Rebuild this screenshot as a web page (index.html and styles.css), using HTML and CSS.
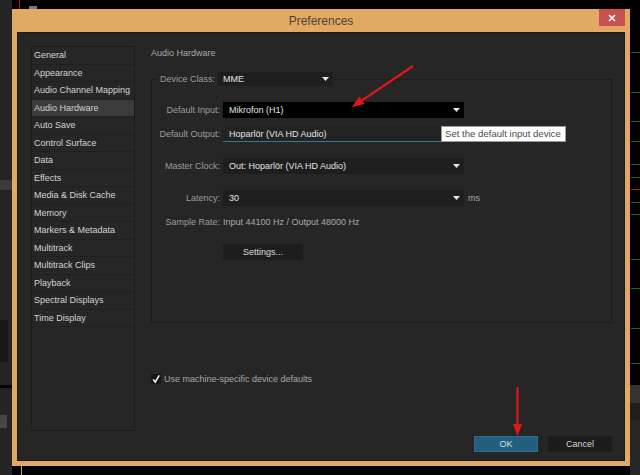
FILE: index.html
```html
<!DOCTYPE html>
<html>
<head>
<meta charset="utf-8">
<link rel="stylesheet" href="styles.css">
</head>
<body>
<div class="desktop">
  <div class="dialog">
    <div class="titlebar">
      <span class="title">Preferences</span>
      <div class="close"><svg width="8" height="8" viewBox="0 0 8 8"><path d="M1 1 L7 7 M7 1 L1 7" stroke="#fff" stroke-width="1.6"/></svg></div>
    </div>
    <div class="content">
      <ul class="nav">
        <li>General</li>
        <li>Appearance</li>
        <li>Audio Channel Mapping</li>
        <li class="active">Audio Hardware</li>
        <li>Auto Save</li>
        <li>Control Surface</li>
        <li>Data</li>
        <li>Effects</li>
        <li>Media &amp; Disk Cache</li>
        <li>Memory</li>
        <li>Markers &amp; Metadata</li>
        <li>Multitrack</li>
        <li>Multitrack Clips</li>
        <li>Playback</li>
        <li>Spectral Displays</li>
        <li>Time Display</li>
      </ul>
      <div class="main">
        <div class="heading">Audio Hardware</div>
        <div class="group">
          <div class="legend">
            <span class="legend-label">Device Class:</span>
            <div class="select class-select"><span>MME</span><svg class="caret" width="7" height="4" viewBox="0 0 7 4"><polygon points="0,0 7,0 3.5,4" fill="#e6e6e6"/></svg></div>
          </div>
          <div class="row row-input">
            <span class="label">Default Input:</span>
            <div class="select black"><span>Mikrofon (H1)</span><svg class="caret" width="7" height="4" viewBox="0 0 7 4"><polygon points="0,0 7,0 3.5,4" fill="#e6e6e6"/></svg></div>
          </div>
          <div class="row row-output">
            <span class="label">Default Output:</span>
            <div class="select focused"><span>Hoparlör (VIA HD Audio)</span></div>
            <div class="tooltip">Set the default input device</div>
          </div>
          <div class="row row-gap">
            <span class="label">Master Clock:</span>
            <div class="select"><span>Out: Hoparlör (VIA HD Audio)</span><svg class="caret" width="7" height="4" viewBox="0 0 7 4"><polygon points="0,0 7,0 3.5,4" fill="#e6e6e6"/></svg></div>
          </div>
          <div class="row row-gap">
            <span class="label">Latency:</span>
            <div class="select"><span>30</span><svg class="caret" width="7" height="4" viewBox="0 0 7 4"><polygon points="0,0 7,0 3.5,4" fill="#e6e6e6"/></svg></div>
            <span class="unit">ms</span>
          </div>
          <div class="row row-rate">
            <span class="label">Sample Rate:</span>
            <span class="value">Input 44100 Hz / Output 48000 Hz</span>
          </div>
          <div class="row row-settings">
            <div class="btn settings">Settings...</div>
          </div>
        </div>
        <div class="check">
          <span class="box"><svg width="10" height="10" viewBox="0 0 10 10"><path d="M2.2 5.4 L4.2 8.2 L8.2 1.4" fill="none" stroke="#fff" stroke-width="1.5"/></svg></span>
          <span class="check-label">Use machine-specific device defaults</span>
        </div>
        <div class="buttons">
          <div class="btn ok">OK</div>
          <div class="btn cancel">Cancel</div>
        </div>
      </div>
    </div>
  </div>
  <svg class="arrows" width="640" height="475" viewBox="0 0 640 475">
    <line x1="413" y1="66" x2="362" y2="100.3" stroke="#e3161b" stroke-width="2.2"/>
    <polygon points="352,107 364.5,104 359.4,96.6" fill="#e3161b"/>
    <line x1="517.5" y1="387" x2="517.5" y2="426" stroke="#e3161b" stroke-width="2.2"/>
    <polygon points="513,424 522,424 517.5,436" fill="#e3161b"/>
  </svg>
</div>
</body>
</html>
```

FILE: styles.css
```css
* { box-sizing: border-box; }

html, body {
  margin: 0;
  padding: 0;
  background: #000;
}

body {
  font-family: "Liberation Sans", Arial, sans-serif;
  font-size: 9px;
}

.desktop {
  position: relative;
  width: 640px;
  height: 475px;
  overflow: hidden;
  padding: 9px 0 0 12px;
  background:
    linear-gradient(#c01818, #c01818) 19px 0 / 1px 9px no-repeat,
    linear-gradient(#7a7a7a, #7a7a7a) 29px 6px / 8px 3px no-repeat,
    linear-gradient(#c9b600, #c9b600) 21px 466px / 1px 9px no-repeat,
    linear-gradient(#1d6a1d, #1d6a1d) 631px 52px / 9px 1px no-repeat,
    linear-gradient(#1d6a1d, #1d6a1d) 631px 92px / 9px 1px no-repeat,
    linear-gradient(#1d6a1d, #1d6a1d) 631px 121px / 9px 1px no-repeat,
    linear-gradient(#1d6a1d, #1d6a1d) 631px 141px / 9px 1px no-repeat,
    linear-gradient(#1d6a1d, #1d6a1d) 631px 164px / 9px 1px no-repeat,
    linear-gradient(#1d6a1d, #1d6a1d) 631px 177px / 9px 1px no-repeat,
    linear-gradient(#c01818, #c01818) 631px 189px / 9px 1px no-repeat,
    linear-gradient(#1d6a1d, #1d6a1d) 631px 202px / 9px 1px no-repeat,
    linear-gradient(#1d6a1d, #1d6a1d) 631px 214px / 9px 1px no-repeat,
    linear-gradient(#1d6a1d, #1d6a1d) 631px 259px / 9px 1px no-repeat,
    linear-gradient(#1d6a1d, #1d6a1d) 631px 288px / 9px 1px no-repeat,
    linear-gradient(#1d6a1d, #1d6a1d) 631px 328px / 9px 1px no-repeat,
    linear-gradient(#1d6a1d, #1d6a1d) 631px 363px / 9px 1px no-repeat,
    linear-gradient(#333, #333) 630px 385px / 10px 18px no-repeat,
    linear-gradient(#1e1e1e, #1e1e1e) 630px 403px / 10px 17px no-repeat,
    linear-gradient(#262626, #262626) 630px 420px / 10px 55px no-repeat,
    linear-gradient(#181818, #181818) 0 320px / 8px 42px no-repeat,
    linear-gradient(#050505, #050505) 0 385px / 12px 3px no-repeat,
    linear-gradient(#474747, #474747) 0 415px / 7px 13px no-repeat,
    linear-gradient(#3a3a3a, #3a3a3a) 0 180px / 12px 10px no-repeat,
    linear-gradient(#242424, #242424) 0 0 / 12px 475px no-repeat,
    #000;
}

.dialog {
  width: 618px;
  height: 457px;
  background: #e1a964;
  padding: 0 5px 5px;
  display: flex;
  flex-direction: column;
}

.titlebar {
  position: relative;
  height: 23px;
  display: flex;
  align-items: center;
  justify-content: center;
}

.title {
  font-size: 12px;
  color: #4f4438;
  margin-top: 1px;
}

.close {
  position: absolute;
  right: 0;
  top: 0;
  width: 26px;
  height: 17px;
  background: #c75050;
  display: flex;
  align-items: center;
  justify-content: center;
}

.content {
  flex: 1;
  background: #262626;
  border: 1px solid #1b1b1b;
  display: flex;
  gap: 16px;
  padding: 13px 12px 8px 13px;
}

.nav {
  list-style: none;
  margin: 0;
  padding: 0;
  width: 104px;
  height: 385px;
  border: 1px solid #1c1c1c;
  flex: none;
}

.nav li {
  height: 17.5px;
  line-height: 16.5px;
  padding-left: 2px;
  border-bottom: 1px solid #202020;
  color: #d4d4d4;
  white-space: nowrap;
  overflow: hidden;
}

.nav li.active {
  background: #3b3b3b;
}

.main {
  flex: 1;
  display: flex;
  flex-direction: column;
}

.heading {
  height: 14px;
  line-height: 14px;
  color: #a9a9a9;
}

.group {
  margin-top: 19px;
  height: 244px;
  border: 1px solid #1c1c1c;
  display: flex;
  flex-direction: column;
}

.legend {
  margin-top: -8px;
  margin-left: 5px;
  padding-left: 3px;
  height: 14px;
  display: flex;
  align-items: stretch;
  gap: 3px;
  width: fit-content;
  background: #262626;
}

.legend-label {
  color: #9c9c9c;
  display: flex;
  align-items: center;
}

.select {
  display: flex;
  align-items: center;
  width: 241px;
  height: 16px;
  padding-left: 6px;
  background: #1e1e1e;
  color: #e4e4e4;
  white-space: nowrap;
}

.select.class-select {
  width: 115px;
  height: 14px;
  padding-left: 5px;
}

.select.black {
  background: #000;
}

.select.focused {
  background: #232323;
  border-bottom: 1px solid #2a7aa3;
}

.caret {
  margin-left: auto;
  margin-right: 4px;
  flex: none;
}

.row {
  position: relative;
  display: flex;
  align-items: center;
  height: 16px;
  gap: 3px;
}

.row .label {
  width: 68px;
  text-align: right;
  color: #9c9c9c;
  white-space: nowrap;
  flex: none;
}

.row-input { margin-top: 16px; }
.row-output { margin-top: 8px; }
.row-gap { margin-top: 16px; }
.row-rate { margin-top: 8px; }
.row-settings { margin-top: 14px; padding-left: 71px; }

.unit {
  margin-left: 1px;
  color: #a9a9a9;
}

.value {
  color: #a9a9a9;
  white-space: nowrap;
}

.tooltip {
  position: absolute;
  left: 289px;
  top: 0;
  width: 125px;
  height: 16px;
  background: #fff;
  border: 1px solid #9a9a9a;
  color: #4a4a4a;
  font-size: 9.6px;
  line-height: 14px;
  padding-left: 3px;
  white-space: nowrap;
}

.btn {
  height: 16px;
  display: flex;
  align-items: center;
  justify-content: center;
  color: #dcdcdc;
  background: #1d1d1d;
}

.settings {
  width: 80px;
}

.check {
  margin-top: 51px;
  height: 10px;
  display: flex;
  align-items: center;
  gap: 3px;
}

.box {
  width: 10px;
  height: 10px;
  background: #171717;
  display: flex;
}

.check-label {
  color: #a8a8a8;
}

.buttons {
  margin-top: auto;
  display: flex;
  justify-content: flex-end;
  gap: 10px;
}

.buttons .btn {
  width: 64px;
}

.ok {
  background: #225e7e;
  border: 1px solid #2b6c8f;
  color: #d6e2ea;
}

.cancel {
  background: #1c1c1c;
  color: #d4d4d4;
}

.arrows {
  position: absolute;
  left: 0;
  top: 0;
  pointer-events: none;
}
```
